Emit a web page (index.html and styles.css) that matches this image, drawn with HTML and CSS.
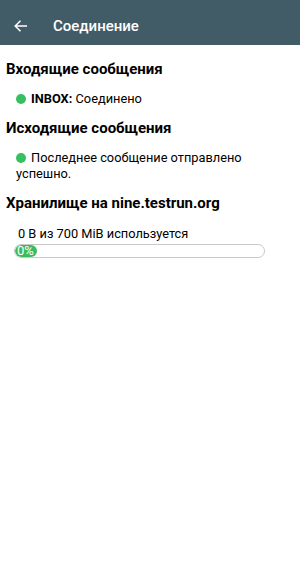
FILE: index.html
```html
<!DOCTYPE html>
<html lang="ru">
<head>
<meta charset="utf-8">
<link rel="stylesheet" href="styles.css">
</head>
<body>
<header class="bar">
  <svg class="back" width="13" height="12" viewBox="0 0 13 12"><path d="M13 6H1.2M6.5 0.7L1.2 6l5.3 5.3" fill="none" stroke="#fff" stroke-width="1.5"/></svg>
  <span class="title">Соединение</span>
</header>
<main class="content">
  <h2 class="head">Входящие сообщения</h2>
  <p class="status"><span class="dot"></span><b>INBOX:</b> Соединено</p>
  <h2 class="head">Исходящие сообщения</h2>
  <p class="status"><span class="dot"></span>Последнее сообщение отправлено успешно.</p>
  <h2 class="head">Хранилище на nine.testrun.org</h2>
  <p class="usage">0 B из 700 MiB используется</p>
  <div class="progress"><div class="fill" style="width:22px">0%</div></div>
</main>
</body>
</html>
```
FILE: styles.css
```css
html, body { margin: 0; padding: 0; background: #fff; }
body { font-family: Roboto, "Noto Sans", sans-serif; color: #000; width: 300px; }
.bar { height: 45px; background: #415b67; display: flex; align-items: center; padding: 6px 0 0 14px; box-sizing: border-box; }
.back { margin-right: 26px; }
.title { color: #fff; font-size: 15px; font-weight: 500; }
.content { padding: 13px 6px 0 6px; }
.head { font-size: 15px; font-weight: 700; margin: 0; line-height: 22px; }
.status { font-size: 12.8px; margin: 11px 0 10px 10px; line-height: 16px; }
.status b { font-weight: 700; }
.dot { display: inline-block; width: 10px; height: 10px; border-radius: 50%; background: #36c061; margin-right: 5px; vertical-align: -1px; }
.usage { font-size: 12.8px; margin: 12px 0 2px 12px; line-height: 16px; }
.progress { margin-left: 8px; width: 251px; height: 14px; border: 1px solid #c8c8c8; border-radius: 7px; box-sizing: border-box; overflow: hidden; }
.fill { height: 100%; background: #3dba5e; color: #fff; font-size: 13px; line-height: 12px; border-radius: 6px; padding-left: 2px; box-sizing: border-box; }
```
